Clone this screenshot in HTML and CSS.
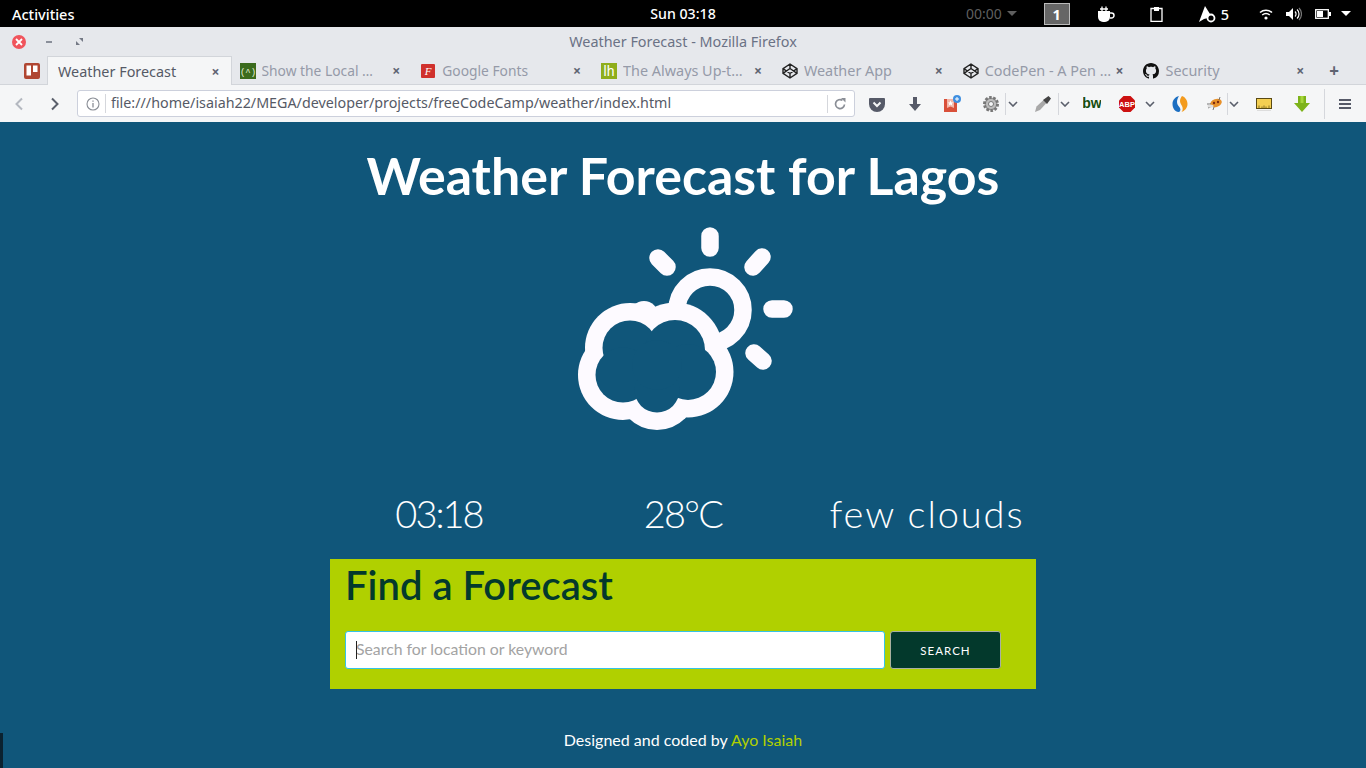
FILE: index.html
```html
<!DOCTYPE html>
<html lang="en">
<head>
  <meta charset="UTF-8" />
  <title>Weather Forecast</title>
  <link rel="stylesheet" href="styles.css">
</head>
<body>

  <!-- gnome top bar -->
  <div class="topbar">
    <div class="activities">Activities</div>
    <div class="clock">Sun 03:18</div>
    <div class="tray">
      <span class="timer">00:00</span>
      <span class="caret caret-dim"></span>
      <span class="workspace">1</span>
      <svg class="tray-coffee" width="18" height="18" viewBox="0 0 18 18"><path d="M1 6h12v6a5 5 0 0 1-5 5H6a5 5 0 0 1-5-5z" fill="#fff"/><path d="M13 8h1.500a2 2 0 0 1 0 5H13" fill="none" stroke="#fff" stroke-width="1.500"/><path d="M5 1.500v5M9 1.500v5M3 4h8" stroke="#fff" stroke-width="1.300" fill="none"/></svg>
      <svg class="tray-clip" width="13" height="16" viewBox="0 0 13 16"><path d="M1 2.500h11v13H1z" fill="none" stroke="#fff" stroke-width="1.300"/><path d="M4 1h5v4H4z" fill="#fff"/></svg>
      <svg class="tray-arch" width="18" height="18" viewBox="0 0 18 18"><path d="M7 1 1 17l5-3 4-1c0-2 1-3 2-4z" fill="#fff"/><circle cx="13" cy="13" r="3.500" fill="none" stroke="#fff" stroke-width="1.800"/></svg>
      <span class="updates">5</span>
      <svg class="tray-wifi" width="14" height="12" viewBox="0 0 14 12"><path d="M1 4.500a9 9 0 0 1 12 0M3.200 7a6 6 0 0 1 7.600 0" fill="none" stroke="#fff" stroke-width="1.500"/><circle cx="7" cy="10" r="1.600" fill="#fff"/></svg>
      <svg class="tray-vol" width="16" height="14" viewBox="0 0 16 14"><path d="M0 5h3l4-4v12l-4-4H0z" fill="#fff"/><path d="M9 4.500a3.500 3.500 0 0 1 0 5M11 2.500a6 6 0 0 1 0 9" fill="none" stroke="#fff" stroke-width="1.200"/><path d="M13 1a8.500 8.500 0 0 1 0 12" fill="none" stroke="#777" stroke-width="1.200"/></svg>
      <svg class="tray-bat" width="16" height="10" viewBox="0 0 16 10"><rect x=".7" y=".7" width="12.600" height="8.600" fill="none" stroke="#fff" stroke-width="1.300"/><rect x="2" y="2" width="6" height="6" fill="#fff"/><rect x="14" y="3" width="2" height="4" fill="#fff"/></svg>
      <span class="caret caret-white"></span>
    </div>
  </div>

  <!-- firefox window chrome -->
  <div class="titlebar">
    <span class="win-close"><svg width="8" height="8" viewBox="0 0 8 8"><path d="M1 1l6 6M7 1l-6 6" stroke="#fff" stroke-width="1.800"/></svg></span>
    <span class="win-min"></span>
    <svg class="win-max" width="7" height="7" viewBox="0 0 7 7"><path d="M3 0h4v4zM0 3v4h4z" fill="#747985"/></svg>
    <div class="win-title">Weather Forecast - Mozilla Firefox</div>
  </div>

  <div class="tabstrip">
    <svg class="pinned" width="16" height="16" viewBox="0 0 16 16"><rect width="16" height="16" rx="2" fill="#b04632"/><rect x="2.500" y="2.500" width="4.500" height="10" fill="#fff"/><rect x="9" y="2.500" width="4.500" height="6.500" fill="#fff"/></svg>
    <div class="tab tab-active">
      <span class="tab-label">Weather Forecast</span><span class="tab-close">×</span>
    </div>
    <div class="tab">
      <svg class="favicon" width="16" height="16" viewBox="0 0 16 16"><rect width="16" height="16" fill="#3b6b1d"/><text x="8" y="11.500" text-anchor="middle" font-size="9" font-family="Liberation Mono" fill="#e8f0d8">(^)</text></svg>
      <span class="tab-label tab-label-tight">Show the Local …</span><span class="tab-close">×</span>
    </div>
    <div class="tab">
      <svg class="favicon favicon-gf" width="14" height="14" viewBox="0 0 14 14"><rect width="14" height="14" rx="1" fill="#d0312d"/><text x="7" y="11" text-anchor="middle" font-size="11" font-style="italic" font-family="Liberation Serif" fill="#fff">F</text></svg>
      <span class="tab-label tab-label-tight">Google Fonts</span><span class="tab-close">×</span>
    </div>
    <div class="tab">
      <svg class="favicon" width="16" height="16" viewBox="0 0 16 16"><rect width="16" height="16" fill="#8fae1b"/><text x="8" y="13" text-anchor="middle" font-size="14" font-family="Liberation Sans" fill="#fff">lh</text></svg>
      <span class="tab-label">The Always Up-t…</span><span class="tab-close">×</span>
    </div>
    <div class="tab">
      <svg class="favicon" width="16" height="16" viewBox="0 0 16 16"><path d="M8 1l7 4.700v4.600L8 15l-7-4.700V5.700zM8 1v4.500M8 10.500V15M1 5.700l7 4.800 7-4.800M1 10.300l7-4.800 7 4.800" fill="none" stroke="#222" stroke-width="1.400"/></svg>
      <span class="tab-label">Weather App</span><span class="tab-close">×</span>
    </div>
    <div class="tab">
      <svg class="favicon" width="16" height="16" viewBox="0 0 16 16"><path d="M8 1l7 4.700v4.600L8 15l-7-4.700V5.700zM8 1v4.500M8 10.500V15M1 5.700l7 4.800 7-4.800M1 10.300l7-4.800 7 4.800" fill="none" stroke="#222" stroke-width="1.400"/></svg>
      <span class="tab-label">CodePen - A Pen …</span><span class="tab-close">×</span>
    </div>
    <div class="tab">
      <svg class="favicon" width="16" height="16" viewBox="0 0 16 16"><path fill="#111" d="M8 0C3.580 0 0 3.580 0 8c0 3.540 2.290 6.530 5.470 7.590.4.070.55-.17.55-.38 0-.19-.01-.82-.01-1.490-2.010.37-2.530-.49-2.690-.94-.09-.23-.48-.94-.82-1.130-.28-.15-.68-.52-.01-.53.63-.01 1.080.58 1.230.82.72 1.210 1.870.87 2.330.66.070-.52.28-.87.51-1.070-1.780-.2-3.640-.89-3.640-3.950 0-.87.31-1.590.82-2.150-.08-.2-.36-1.020.08-2.120 0 0 .67-.21 2.200.82.64-.18 1.320-.27 2-.27.68 0 1.360.09 2 .27 1.530-1.040 2.200-.82 2.200-.82.44 1.100.16 1.920.08 2.120.51.56.82 1.270.82 2.150 0 3.070-1.870 3.750-3.650 3.950.29.25.54.73.54 1.480 0 1.070-.01 1.930-.01 2.200 0 .21.15.46.55.38A8.013 8.013 0 0016 8c0-4.420-3.580-8-8-8z"/></svg>
      <span class="tab-label">Security</span><span class="tab-close">×</span>
    </div>
    <span class="new-tab">+</span>
  </div>

  <div class="navbar">
    <svg class="nav-back" width="10" height="14" viewBox="0 0 10 14"><path d="M8 1.500L2.500 7 8 12.500" fill="none" stroke="#b4b8c0" stroke-width="2"/></svg>
    <svg class="nav-forward" width="10" height="14" viewBox="0 0 10 14"><path d="M2 1.500L7.500 7 2 12.500" fill="none" stroke="#5a5f6b" stroke-width="2"/></svg>
    <div class="urlbar">
      <svg class="url-info" width="14" height="14" viewBox="0 0 14 14"><circle cx="7" cy="7" r="6" fill="none" stroke="#8a8e96" stroke-width="1.100"/><path d="M7 6v4.500M7 3.500v1.300" stroke="#8a8e96" stroke-width="1.300"/></svg>
      <span class="url-text">file:///home/isaiah22/MEGA/developer/projects/freeCodeCamp/weather/index.html</span>
      <span class="url-sep"></span>
      <svg class="url-reload" width="12" height="12" viewBox="0 0 12 12"><path d="M10.500 6.500A4.500 4.500 0 1 1 8.500 2.300" fill="none" stroke="#8a8e96" stroke-width="1.700"/><path d="M7 0h4.500v4.500z" fill="#8a8e96"/></svg>
    </div>

    <svg class="tool t-pocket" width="18" height="18" viewBox="0 0 18 18"><path d="M2 3h14a1 1 0 0 1 1 1v5a8 8 0 0 1-16 0V4a1 1 0 0 1 1-1z" fill="#565a68"/><path d="M5.500 7.500L9 11l3.500-3.500" fill="none" stroke="#f5f6f7" stroke-width="2"/></svg>
    <svg class="tool t-down" width="18" height="18" viewBox="0 0 18 18"><path d="M7 2h4v7h4l-6 7-6-7h4z" fill="#565a68"/></svg>
    <svg class="tool t-star" width="18" height="18" viewBox="0 0 18 18"><path d="M1 4h13v13H1z" fill="#d9503a"/><path d="M4 4h7v9l-3.500-1.500L4 13z" fill="#f3b6a8"/><path d="M7.500 5.500l.9 2h2l-1.600 1.300.6 2-1.900-1.200-1.900 1.200.6-2L4.600 7.500h2z" fill="#fff"/><circle cx="14" cy="4" r="4" fill="#3f8fe0"/><path d="M14 2v4M12 4h4" stroke="#fff" stroke-width="1"/></svg>
    <svg class="tool t-gear" width="18" height="18" viewBox="0 0 18 18"><circle cx="9" cy="9" r="6.500" fill="#9a9a9a" stroke="#777" stroke-width="3" stroke-dasharray="2.500 1.500"/><circle cx="9" cy="9" r="5" fill="#bdbdbd"/><circle cx="9" cy="9" r="2.500" fill="#f5f6f7" stroke="#777"/></svg>
    <span class="tool-sep s-1"></span>
    <svg class="chev c-1" width="10" height="6" viewBox="0 0 10 6"><path d="M1 1l4 4 4-4" fill="none" stroke="#5a5f6b" stroke-width="1.600"/></svg>
    <svg class="tool t-dropper" width="18" height="18" viewBox="0 0 18 18"><path d="M1 17l1.500-5.500 7-6.500 3 3-6.500 7z" fill="#a8a8a8"/><path d="M9 5l5.500-4L17 3.500l-4 5.500z" fill="#444"/></svg>
    <span class="tool-sep s-2"></span>
    <svg class="chev c-2" width="10" height="6" viewBox="0 0 10 6"><path d="M1 1l4 4 4-4" fill="none" stroke="#5a5f6b" stroke-width="1.600"/></svg>
    <svg class="tool t-bw" width="18" height="18" viewBox="0 0 18 18"><text x="9" y="13" text-anchor="middle" font-size="14" font-weight="700" font-family="Liberation Sans" fill="#164d0f">bw</text></svg>
    <svg class="tool t-abp" width="18" height="18" viewBox="0 0 18 18"><path d="M5.500 1h7L17 5.500v7L12.500 17h-7L1 12.500v-7z" fill="#cc1111"/><text x="9" y="12" text-anchor="middle" font-size="7.500" font-weight="700" font-family="Liberation Sans" fill="#fff">ABP</text></svg>
    <svg class="chev c-3" width="10" height="6" viewBox="0 0 10 6"><path d="M1 1l4 4 4-4" fill="none" stroke="#5a5f6b" stroke-width="1.600"/></svg>
    <svg class="tool t-swirl" width="18" height="18" viewBox="0 0 18 18"><path d="M8 1C4 2 1.500 5 1.500 9c0 4 2.500 8 6 8 1.500 0 2.500-2 1.500-4-1-2-3-3-3-6 0-2.500 1-4.500 2-6z" fill="#1c6fc2"/><path d="M11 1c3 1 5.500 4 5.500 8s-3 7-6 8c1.500-1.500 1.500-4 .5-6-1-2-2-3-2-5 0-2 1-4 2-5z" fill="#f39b1e"/></svg>
    <svg class="tool t-bug" width="18" height="18" viewBox="0 0 18 18"><ellipse cx="10" cy="8" rx="6" ry="4" fill="#e8912a" transform="rotate(-20 10 8)"/><circle cx="8" cy="8" r="1.200" fill="#7a2a10"/><circle cx="12" cy="7" r="1.200" fill="#7a2a10"/><path d="M1 9l4 0M2 13l4-2M7 15l1-3M14 2l-1 3" stroke="#555" stroke-width=".8"/><ellipse cx="4.500" cy="11" rx="3" ry="1.500" fill="#ddd"/></svg>
    <span class="tool-sep s-3"></span>
    <svg class="chev c-4" width="10" height="6" viewBox="0 0 10 6"><path d="M1 1l4 4 4-4" fill="none" stroke="#5a5f6b" stroke-width="1.600"/></svg>
    <svg class="tool t-ruler" width="18" height="18" viewBox="0 0 18 18"><rect x="1.500" y="3.500" width="15" height="10" fill="#f4cf52" stroke="#5a4a14"/><path d="M4 13.500v-3M7 13.500v-2M9 13.500v-3M11 13.500v-2M14 13.500v-3" stroke="#5a4a14" stroke-width=".7"/><rect x="2" y="15" width="14" height="1" fill="#ddd"/></svg>
    <svg class="tool t-green" width="18" height="18" viewBox="0 0 18 18"><path d="M5 1h8v7h4l-8 9-8-9h4z" fill="#7db31a"/><path d="M7.500 1h3v7h-3z" fill="#a8d63c"/></svg>
    <span class="tool-sep s-4"></span>
    <svg class="tool t-burger" width="18" height="18" viewBox="0 0 18 18"><path d="M3 4h12v2H3zM3 8h12v2H3zM3 12h12v2H3z" fill="#565a68"/></svg>
  </div>

  <!-- the weather page -->
  <main class="page">
    <h1 class="headline">Weather Forecast for Lagos</h1>

    <svg class="weather-icon" width="250" height="225" viewBox="-2 0 250 225">
      <g fill="none" stroke="#fdfaff" stroke-linecap="round" stroke-width="17.500">
        <path d="M150 21v12M98 43l9 9M202 42l-9 10M212 94h12M194 138l9 8"/>
        <circle cx="150" cy="95" r="33"/>
      </g>
      <g fill="#fdfaff">
        <circle cx="84" cy="100" r="14"/>
        <circle cx="70" cy="133" r="45"/>
        <circle cx="115" cy="135" r="47.500"/>
        <circle cx="128" cy="157" r="45.500"/>
        <circle cx="63" cy="160" r="45"/>
        <circle cx="97" cy="175" r="40"/>
      </g>
      <g fill="#10567a">
        <circle cx="70" cy="133" r="27.500"/>
        <circle cx="115" cy="135" r="30"/>
        <circle cx="128" cy="157" r="28"/>
        <circle cx="63" cy="160" r="27.500"/>
        <circle cx="97" cy="175" r="22.500"/>
        <circle cx="97" cy="150" r="25"/>
      </g>
    </svg>

    <div class="stats">
      <div class="stat stat-time">03:18</div>
      <div class="stat stat-temp">28°C</div>
      <div class="stat stat-sky">few clouds</div>
    </div>

    <section class="finder">
      <h2 class="finder-title">Find a Forecast</h2>
      <form class="finder-form">
        <div class="search-wrap">
          <input class="search-input" type="text" placeholder="Search for location or keyword">
          <span class="text-caret"></span>
        </div>
        <button class="search-btn" type="button">SEARCH</button>
      </form>
    </section>

    <p class="credit">Designed and coded by <a class="credit-link" href="#">Ayo Isaiah</a></p>
  </main>

  <span class="edge-sliver"></span>

</body>
</html>
```

FILE: styles.css
```css
* {
  box-sizing: border-box;
}

html, body {
  margin: 0;
  height: 768px;
  overflow: hidden;
}

body {
  font-family: 'Noto Sans', 'Open Sans', sans-serif;
  background-color: #10567a;
  position: relative;
}

/* top bar */
.topbar {
  height: 27px;
  background-color: #000;
  color: #fff;
  display: grid;
  grid-template-columns: 1fr auto 1fr;
  align-items: center;
  font-size: 14.5px;
}

.activities {
  padding-left: 12px;
  font-weight: 500;
}

.clock {
  font-size: 14.2px;
  font-weight: 500;
}

.tray {
  display: flex;
  align-items: center;
  justify-content: flex-end;
  padding-right: 15px;
}

.timer {
  color: #5f5f5f;
  font-size: 14px;
}

.caret {
  width: 0;
  height: 0;
  border-left: 5px solid transparent;
  border-right: 5px solid transparent;
  border-top: 5px solid #5f5f5f;
}

.caret-dim {
  margin-left: 5px;
}

.caret-white {
  border-top-color: #fff;
  margin-left: 10px;
}

.workspace {
  width: 26px;
  height: 22px;
  margin-left: 27px;
  background-color: #666;
  border: 1px solid #bbb;
  text-align: center;
  font-weight: 700;
  line-height: 20px;
}

.tray-coffee { margin-left: 27px; }
.tray-clip { margin-left: 35px; }
.tray-arch { margin-left: 35px; }
.updates { margin-left: 5px; font-weight: 500; }
.tray-wifi { margin-left: 30px; }
.tray-vol { margin-left: 13px; }
.tray-bat { margin-left: 13px; }

/* window title */
.titlebar {
  height: 29px;
  background-color: #e6e8ec;
  position: relative;
  display: flex;
  align-items: center;
}

.win-close {
  width: 14px;
  height: 14px;
  margin-left: 12px;
  border-radius: 50%;
  background-color: #f0545c;
  display: flex;
  align-items: center;
  justify-content: center;
}

.win-min {
  width: 6px;
  height: 2px;
  margin-left: 20px;
  background-color: #8a8f9a;
}

.win-max {
  margin-left: 24px;
}

.win-title {
  position: absolute;
  left: 0;
  right: 0;
  text-align: center;
  color: #6b7285;
  font-size: 14.4px;
}

/* tabs */
.tabstrip {
  height: 29px;
  background-color: #e6e8ec;
  border-bottom: 1px solid #d2d5da;
  display: flex;
  align-items: flex-start;
}

.pinned {
  margin: 7px 7px 0 24px;
}

.tab {
  width: 180.8px;
  height: 29px;
  display: flex;
  align-items: center;
  padding: 0 12px 0 8px;
  color: #959aa8;
  font-size: 14.4px;
  white-space: nowrap;
}

.tab-active {
  width: 184.5px;
  height: 29px;
  padding: 0 11px 0 10px;
  background-color: #f5f6f7;
  border: 1px solid #d2d5da;
  border-bottom: none;
  color: #565a66;
}

.favicon {
  flex: none;
  margin-right: 6px;
}

.favicon-gf {
  margin-left: 1px;
  margin-right: 7px;
}

.tab-label {
  flex: 1;
  overflow: hidden;
}

.tab-label-tight {
  font-size: 13.8px;
}

.tab-close {
  color: #5f6472;
  font-size: 14px;
  font-weight: 700;
}

.new-tab {
  margin-left: 13px;
  color: #5f6472;
  font-size: 17px;
  font-weight: 700;
  line-height: 29px;
}

/* nav bar */
.navbar {
  height: 37px;
  background-color: #f5f6f7;
  display: flex;
  align-items: center;
  padding-left: 14px;
}

.nav-forward {
  margin-left: 26px;
}

.urlbar {
  width: 778px;
  height: 27px;
  margin-left: 17px;
  background-color: #fff;
  border: 1px solid #ccd0dc;
  border-radius: 3px;
  display: flex;
  align-items: center;
  padding-left: 8px;
  font-size: 14.3px;
  color: #565a66;
}

.url-info {
  flex: none;
}

.url-text {
  flex: 1;
  margin-left: 5px;
  padding-left: 5px;
  padding-bottom: 2px;
  border-left: 1px solid #d5d7dc;
  white-space: nowrap;
  line-height: 17px;
}

.url-sep {
  flex: none;
  width: 1px;
  height: 18px;
  background-color: #d5d7dc;
}

.url-reload {
  flex: none;
  margin: 0 8px 0 6px;
}

.tool, .chev {
  flex: none;
}

.tool-sep {
  flex: none;
  width: 1px;
  height: 22px;
  background-color: #d5d7dc;
}

.t-pocket { margin-left: 13px; }
.t-down { margin-left: 20px; }
.t-star { margin-left: 19px; }
.t-gear { margin-left: 21px; }
.s-1 { margin-left: 5px; }
.c-1 { margin-left: 2px; }
.t-dropper { margin-left: 16px; }
.s-2 { margin-left: 6px; }
.c-2 { margin-left: 1px; }
.t-bw { margin-left: 13px; }
.t-abp { margin-left: 17px; }
.c-3 { margin-left: 9px; }
.t-swirl { margin-left: 16px; }
.t-bug { margin-left: 17px; }
.s-3 { margin-left: 3px; }
.c-4 { margin-left: 1px; }
.t-ruler { margin-left: 16px; }
.t-green { margin-left: 20px; }
.s-4 { margin-left: 13px; height: 30px; }
.t-burger { margin-left: 11px; }

/* page */
.page {
  height: 646px;
  display: flex;
  flex-direction: column;
  align-items: center;
  color: #fff;
}

.headline {
  margin: 19px 0 0;
  height: 74px;
  font-family: 'Lato', sans-serif;
  font-size: 51.9px;
  font-weight: 700;
  line-height: 68px;
}

.weather-icon {
  display: block;
}

.stats {
  width: 732px;
  margin-top: 48px;
  padding-bottom: 2px;
  display: grid;
  grid-template-columns: repeat(3, 1fr);
}

.stat {
  font-family: 'Lato', sans-serif;
  font-size: 38px;
  font-weight: 300;
  line-height: 50px;
  text-align: center;
}

.stat-time {
  letter-spacing: -2px;
}

.stat-temp {
  letter-spacing: -1.7px;
}

.stat-sky {
  letter-spacing: 1.9px;
}

.finder {
  width: 706px;
  height: 130px;
  margin-top: 19px;
  padding: 4px 35px 0 15px;
  background-color: #b0d000;
}

.finder-title {
  margin: 0;
  height: 68px;
  font-family: 'Lato', sans-serif;
  font-size: 40px;
  font-weight: 600;
  line-height: 44px;
  color: #03392c;
}

.finder-form {
  display: flex;
  gap: 5px;
}

.search-wrap {
  position: relative;
  width: 540px;
}

.search-input {
  width: 100%;
  height: 38px;
  padding: 0 10px 4px;
  background-color: #fff;
  border: 1px solid #35c4e6;
  border-radius: 3px;
  font-family: 'Lato', sans-serif;
  font-size: 15.8px;
  outline: none;
}

.search-input::placeholder {
  color: #a3a3a3;
}

.text-caret {
  position: absolute;
  left: 11px;
  top: 10px;
  width: 1px;
  height: 18px;
  background-color: #222;
}

.search-btn {
  width: 111px;
  height: 38px;
  background-color: #03392c;
  border: 1px solid #a9b0a0;
  border-radius: 3px;
  color: #fff;
  font-family: 'Lato', sans-serif;
  font-size: 11.5px;
  letter-spacing: 1px;
}

.credit {
  margin: 41px 0 0;
  font-family: 'Lato', sans-serif;
  font-size: 16px;
  line-height: 20px;
}

.credit-link {
  color: #b0d000;
  text-decoration: none;
}

.edge-sliver {
  position: absolute;
  left: 0;
  bottom: 0;
  width: 3px;
  height: 35px;
  background-color: #0b2230;
}
```
